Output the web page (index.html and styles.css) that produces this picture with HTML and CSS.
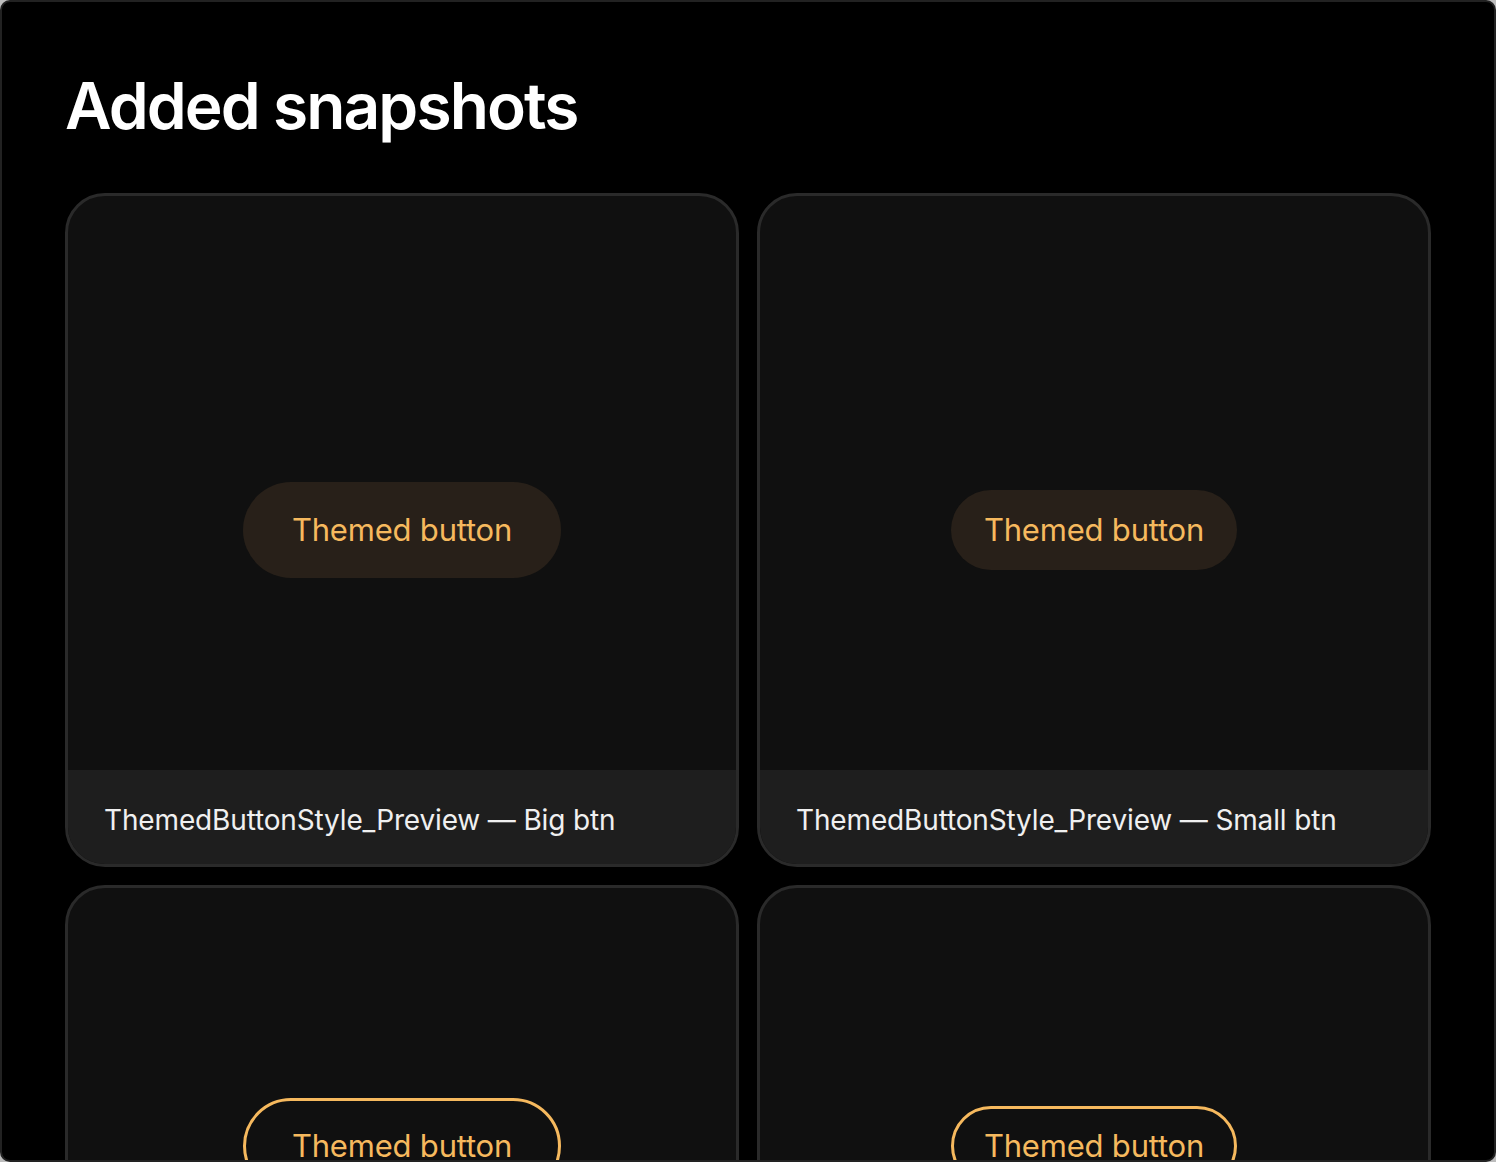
FILE: index.html
```html
<!DOCTYPE html>
<html>
<head>
    <title>Added snapshots</title>
    <link rel="stylesheet" href="styles.css">
</head>
<body>
    <div class="frame">
        <h1 class="title">Added snapshots</h1>
        <div class="grid">
            <div class="card">
                <div class="preview">
                    <span class="btn btn-big">Themed button</span>
                </div>
                <div class="caption">ThemedButtonStyle_Preview — Big btn</div>
            </div>
            <div class="card">
                <div class="preview">
                    <span class="btn btn-small">Themed button</span>
                </div>
                <div class="caption">ThemedButtonStyle_Preview — Small btn</div>
            </div>
            <div class="card card-short">
                <div class="preview">
                    <span class="btn btn-big btn-outline">Themed button</span>
                </div>
                <div class="caption">OutlinedButtonStyle_Preview — Big btn</div>
            </div>
            <div class="card card-short">
                <div class="preview">
                    <span class="btn btn-small btn-outline">Themed button</span>
                </div>
                <div class="caption">OutlinedButtonStyle_Preview — Small btn</div>
            </div>
        </div>
    </div>
</body>
</html>
```

FILE: styles.css
```css
html, body {
    margin: 0;
    padding: 0;
    background-color: #bdbdbd;
}

body {
    font-family: Inter, "Liberation Sans", sans-serif;
    height: 1162px;
    overflow: hidden;
}

.frame {
    box-sizing: border-box;
    height: 1162px;
    background-color: #000;
    border: 2px solid #222;
    border-radius: 10px;
    padding: 0 63px;
    overflow: hidden;
}

.title {
    margin: 0;
    padding-top: 66px;
    height: 191px;
    box-sizing: border-box;
    color: #fff;
    font-size: 64px;
    font-weight: 600;
    line-height: 76px;
    letter-spacing: -1.9px;
}

.grid {
    display: grid;
    grid-template-columns: 674px 674px;
    gap: 18px 18px;
    align-items: start;
}

.card {
    box-sizing: border-box;
    height: 674px;
    border: 3px solid #2a2a2a;
    border-radius: 40px;
    background-color: #101010;
    overflow: hidden;
    display: grid;
}

.card-short {
    height: 522px;
}

.preview,
.caption {
    grid-area: 1 / 1;
}

.preview {
    display: flex;
    align-items: center;
    justify-content: center;
}

.caption {
    align-self: end;
    height: 94px;
    box-sizing: border-box;
    padding: 2px 36px 0;
    background-color: #1e1e1e;
    color: #f0f0f0;
    font-size: 28px;
    line-height: 96px;
    letter-spacing: -0.15px;
}

.btn {
    box-sizing: border-box;
    display: inline-block;
    color: #f6b95e;
    font-size: 31px;
    letter-spacing: -0.2px;
    border-radius: 48px;
    background-color: #282019;
    text-align: center;
}

.btn-big {
    width: 318px;
    height: 96px;
    line-height: 96px;
}

.btn-small {
    width: 286px;
    height: 80px;
    line-height: 80px;
}

.btn-outline {
    background-color: transparent;
    border: 3px solid #f6b95e;
    line-height: 90px;
}

.btn-small.btn-outline {
    line-height: 74px;
}
```
